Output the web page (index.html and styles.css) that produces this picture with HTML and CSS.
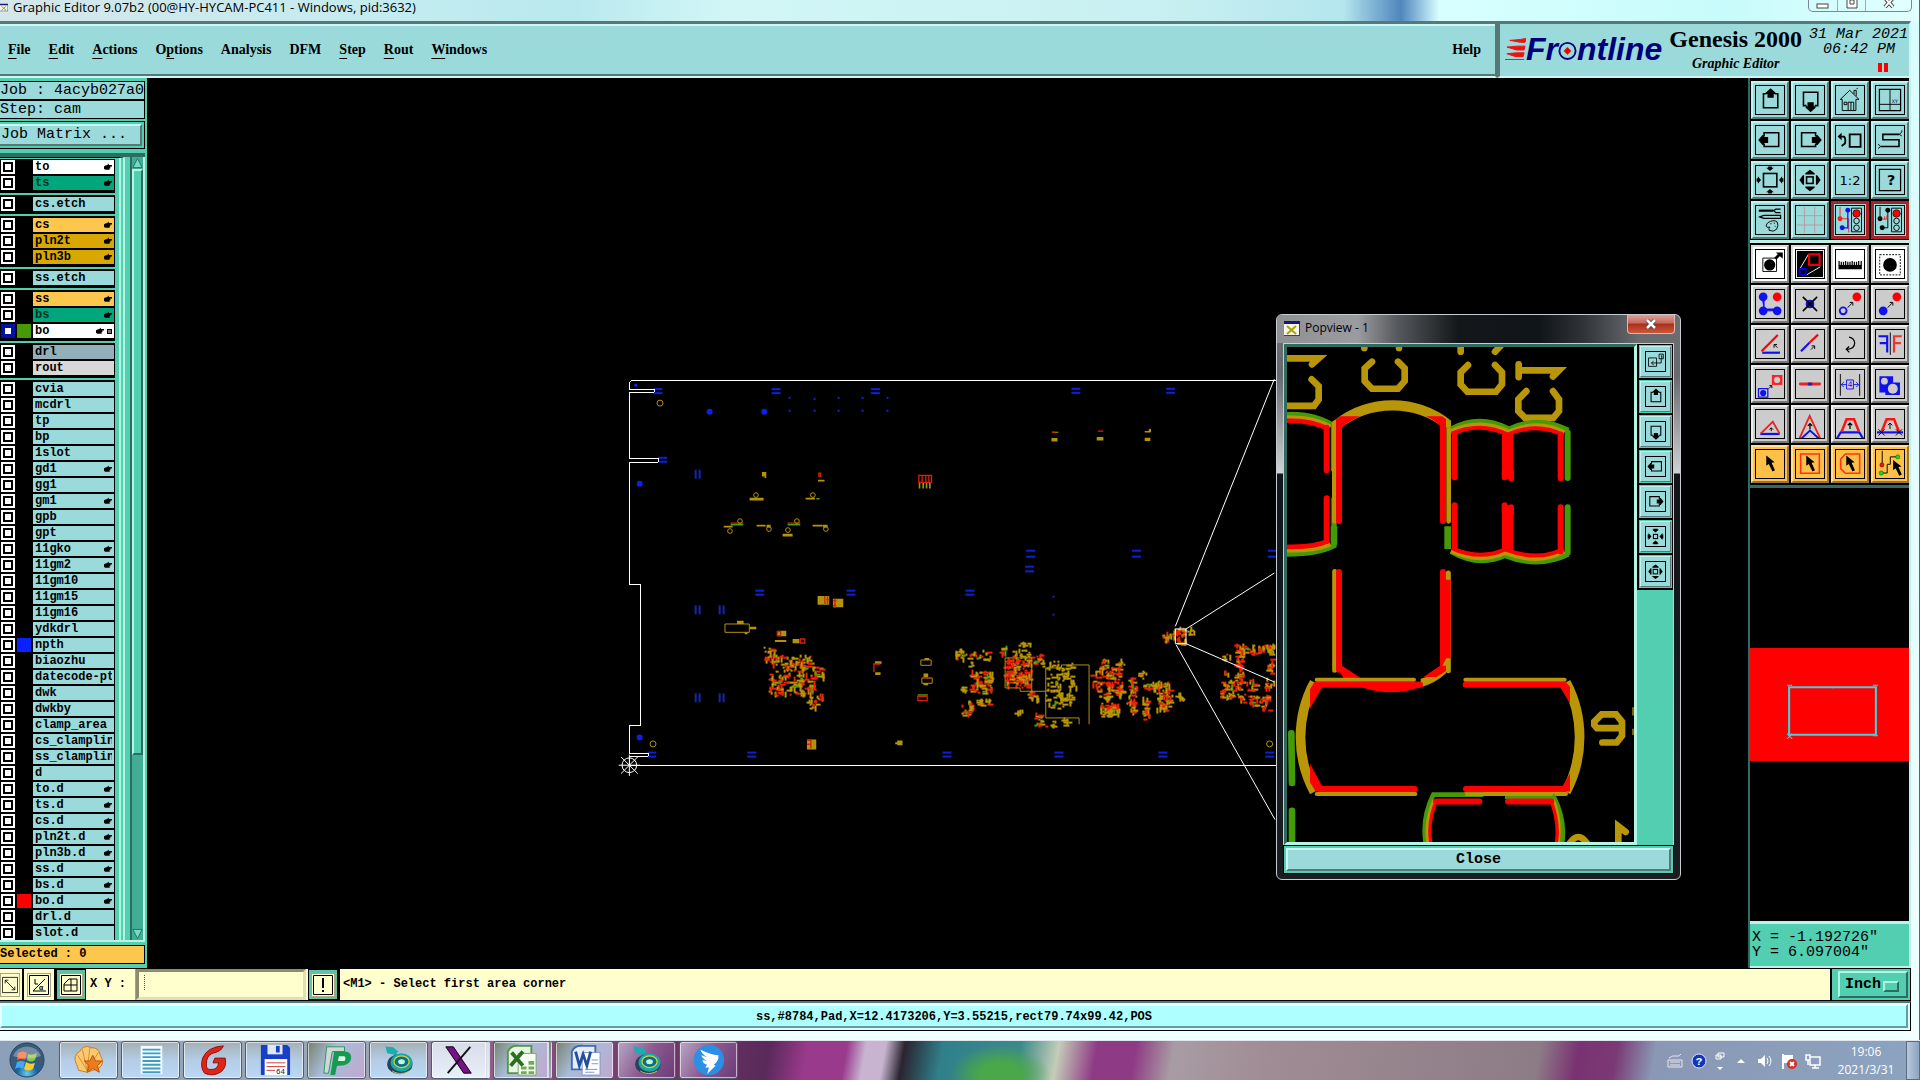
FILE: index.html
```
<!DOCTYPE html>
<html lang="en">
<head>
  <meta charset="UTF-8" />
  <meta name="viewport" content="width=device-width, initial-scale=1.0"/>
  <title>Graphic Editor</title>
  <link rel="stylesheet" href="styles.css">
</head>
<body>
  <!-- shared icons, drawn on a 90 unit grid -->
  <svg class="defs" aria-hidden="true">
    <symbol id="i-up" viewBox="0 0 90 90"><path d="M34 25H24v45h46V25H60" fill="none" stroke="#000" stroke-width="5"/><path d="M47 7l16 15v4h-6v12H37V26h-6v-4z"/></symbol>
    <symbol id="i-down" viewBox="0 0 90 90"><path d="M34 63H24V20h46v43H60" fill="none" stroke="#000" stroke-width="5"/><path d="M47 84l16-14v-5h-6V52H37v13h-6v5z"/></symbol>
    <symbol id="i-left" viewBox="0 0 90 90"><path d="M26 34V22h47v44H26V56" fill="none" stroke="#000" stroke-width="5"/><path d="M7 45l14-16h5v6h13v20H26v6h-5z"/></symbol>
    <symbol id="i-right" viewBox="0 0 90 90"><path d="M63 34V22H18v44h45V56" fill="none" stroke="#000" stroke-width="5"/><path d="M83 45L69 29h-5v6H51v20h13v6h5z"/></symbol>
    <symbol id="i-in" viewBox="0 0 90 90"><rect x="24" y="24" width="43" height="43" fill="none" stroke="#000" stroke-width="5"/><path d="M39 2h12v4h6L45 16 33 6h6zM39 88h12v-4h6L45 74 33 84h6zM2 39v12h4v6l10-12L6 33v6zM88 39v12h-4v6L74 45l10-12v6z"/></symbol>
    <symbol id="i-shrink" viewBox="0 0 90 90"><rect x="35" y="35" width="20" height="20" fill="none" stroke="#000" stroke-width="5"/><path d="M35 8h20v4h6L45 26 29 12h6zM35 82h20v-4h6L45 64 29 78h6zM8 35v20h4v6l14-16L12 29v6zM82 35v20h-4v6L64 45l14-16v6z"/></symbol>
    <symbol id="i-out" viewBox="0 0 90 90"><rect x="34" y="35" width="21" height="21" fill="none" stroke="#000" stroke-width="5"/><path d="M45 12L30 23v4h30v-4zM45 81L30 70v-4h30v4zM11 45l11-15h4v30h-4zM79 45L68 30h-4v30h4z"/></symbol>
    <symbol id="i-cursor" viewBox="0 0 90 90"><path d="M33 18v33l8-6 12 24 8-4-11-24 10-2z"/></symbol>
    <symbol id="i-hand" viewBox="0 0 10 9"><path d="M1 3l3-1 2-2v2h4v2H8v2H7v2H2L0 7V4z" fill="#000"/></symbol>
    <symbol id="i-x" viewBox="0 0 16 15"><rect width="16" height="15" fill="#f4f4ee"/><path d="M0 0h16v3H0z" fill="#15157c"/><path d="M3 5l9 8M12 5l-9 8" stroke="#a8a800" stroke-width="2"/><path d="M0 14.500h16M15.500 3v12" stroke="#444"/></symbol>
    <symbol id="i-tape" viewBox="0 0 34 38"><path d="M1 3l9 1 6 5-3 4-10-2z" fill="#19aeb4"/><ellipse cx="18" cy="24" rx="15" ry="12" fill="#28405a"/><ellipse cx="20" cy="22" rx="13" ry="11" fill="#16a9a6"/><ellipse cx="20" cy="21" rx="9" ry="7" fill="#0d6f80" stroke="#d9cf3e" stroke-width="1.500"/><ellipse cx="20" cy="21" rx="4" ry="3" fill="#bff5e4"/><path d="M9 32c6 4 14 4 20 0" stroke="#e2d64b" fill="none"/></symbol>
  </svg>

  <div class="window">
    <div class="titlebar">
      <svg class="app-icon"><use href="#i-x"/></svg>
      <span>Graphic Editor 9.07b2 (00@HY-HYCAM-PC411 - Windows, pid:3632)</span>
      <div class="win-controls">
        <button aria-label="Minimize"><svg viewBox="0 0 14 10"><rect x="1" y="4" width="11" height="4" fill="#fff" stroke="#444"/></svg></button>
        <button aria-label="Restore"><svg viewBox="0 0 14 10"><path d="M2-4h10V8H2zM5 0h4v4H5z" fill="#fff" stroke="#444"/></svg></button>
        <button class="wide" aria-label="Close window"><svg viewBox="0 0 14 10"><path d="M3-2l8 9M11-2L3 7" stroke="#444" stroke-width="4"/><path d="M3-2l8 9M11-2L3 7" stroke="#fff" stroke-width="2"/></svg></button>
      </div>
    </div>

    <header class="header">
      <nav class="menu">
        <a href="#"><u>F</u>ile</a>
        <a href="#"><u>E</u>dit</a>
        <a href="#"><u>A</u>ctions</a>
        <a href="#">O<u>p</u>tions</a>
        <a href="#">Analysis</a>
        <a href="#">DFM</a>
        <a href="#"><u>S</u>tep</a>
        <a href="#"><u>R</u>out</a>
        <a href="#"><u>W</u>indows</a>
        <a href="#" class="help">Help</a>
      </nav>
      <div class="brand">
        <div class="logo">
          <svg class="speed" viewBox="0 0 22 24"><path d="M5 3l11-1 6-1-1 4H16zM2 10l11-1h8l-1 4h-8zM2 17l10-1h8l-1 4h-8zM0 23h20" fill="#e11" stroke="#e11"/></svg>
          <span>Fr</span>
          <svg class="target" viewBox="0 0 20 24"><circle cx="10" cy="14" r="8.500" fill="none" stroke="#00007c" stroke-width="2"/><path d="M10 10l4 4-4 4-4-4z" fill="#e00"/></svg>
          <span>ntline</span>
        </div>
        <div class="product">
          <strong>Genesis 2000</strong>
          <em>Graphic Editor</em>
        </div>
        <div class="clock">
          <div>31 Mar 2021</div>
          <div class="time">06:42 PM</div>
          <div class="pause"><i></i><i></i></div>
        </div>
      </div>
    </header>

    <main class="main">
      <aside class="left">
        <div class="info">Job : 4acyb027a0</div>
        <div class="info">Step: cam</div>
        <div class="matrix-wrap"><button class="matrix">Job Matrix ...</button></div>
        <div class="layer-box">
          <div class="layers" id="layers"></div>
          <div class="track">
            <svg viewBox="0 0 12 12"><path d="M6 1l5 10H1z" fill="#72dcc6" stroke="#2b6e62"/></svg>
            <div class="thumb"></div>
            <div class="rest"></div>
            <svg viewBox="0 0 12 12"><path d="M6 11L1 1h10z" fill="#72dcc6" stroke="#2b6e62"/></svg>
          </div>
        </div>
        <div class="selected">Selected : 0</div>
      </aside>

      <section class="canvas">
        <svg class="board" viewBox="147 78 1602 889" preserveAspectRatio="xMinYMin meet">
          <g transform="translate(610 370) scale(.33333)">
            <g id="clusters"></g>
            <g fill="none" stroke="#b39309" stroke-width="3">
              <path d="M346 763h73v25h-73zM934 871h31v16h-31zM937 925h31v16h-31zM1309 895h47v-9h83v178M1309 895v150h100v19M1187 865h80v100h42M1187 865v90h45v10h35"/>
            </g>
            <g fill="#b39309">
              <path d="M457 307h13v18h-5v-5h-8zM625 330h20v5h-20zM420 384h42v8h-42zM588 384h28v5h-28zM342 468h27v5h-27zM441 465h27v5h-27zM471 465h12v8h-12zM609 465h30v5h-30zM640 465h14v8h-14zM519 492h30v8h-30zM382 753h20v10h-20zM420 771h20v8h-20zM405 788h9v6h-9zM624 679h35v26h-35zM670 687h31v26h-31zM503 783h27v17h-27zM496 811h34v6h-34zM549 808h20v13h-20zM592 1110h28v30h-28zM857 1118h8v6h-8zM863 1113h16v14h-16zM796 875h20v8h-20zM797 908h16v8h-16zM942 912h14v10h-14zM942 941h14v6h-14zM945 865h14v6h-14z"/>
              <path d="M1326 205h18v10h-18zM1330 186h17v3h-17zM1462 202h20v10h-20zM1606 204h17v10h-17zM1606 184h18v4h-18zM1618 178h7v9h-7z"/>
            </g>
            <path d="M930 339v17M941 339v17M951 339v17M961 339v17" stroke="#8c9a10" stroke-width="5"/>
            <path d="M928 317h38v21h-38zM938 317v20M949 317v20M958 317v20M646 679v24M650 690h9M654 679v24M676 687v28M670 693h11M670 708h11M503 786h10v12h-10zM572 808h14v12h-14zM592 1112h12v25M592 1124h12M1465 184h17M1327 187h10M793 907v-24h20M925 980h28v13h-28zM363 460h38M534 460h38M628 310h5v10h-5zM940 925h25" fill="none" stroke="#d9200a" stroke-width="4"/>
            <path d="M363 465h38M534 465h38M620 387h10M925 976h30" stroke="#4c9a10" stroke-width="4"/>
            <g id="pads"></g>
            <g fill="none" stroke="#b39309" stroke-width="3">
              <circle cx="151" cy="100" r="9"/><circle cx="130" cy="1123" r="9"/><circle cx="1981" cy="1123" r="9"/>
              <circle cx="439" cy="376" r="7"/><circle cx="610" cy="376" r="7"/><circle cx="391" cy="454" r="7"/><circle cx="361" cy="484" r="7"/>
              <circle cx="478" cy="478" r="7"/><circle cx="562" cy="454" r="7"/><circle cx="535" cy="481" r="7"/><circle cx="649" cy="478" r="7"/>
            </g>
            <g fill="none" stroke="#fff" stroke-width="3">
              <path shape-rendering="crispEdges" d="M2020 31H68l-9 7v20h75v9H59v198h87v12H59v366h33v426H59v82h57v9H59v27h1961"/>
              <path d="M1698 770L1995 28M1730 778l265-168M1730 822l265 115M1700 825l297 525M1698 778h32v44h-32z"/>
              <circle cx="59" cy="1187" r="22"/>
              <path d="M27 1187h64M59 1155v64M34 1162l50 50M84 1162l-50 50"/>
            </g>
          </g>
        </svg>
      </section>

      <aside class="right">
        <div class="tools">
          <button class="tool" aria-label="Pan up"><svg><use href="#i-up"/></svg></button>
          <button class="tool" aria-label="Pan down"><svg><use href="#i-down"/></svg></button>
          <button class="tool" aria-label="Home"><svg viewBox="0 0 90 90"><path d="M14 43l30-29 30 29H64v36H20V43zM58 26V14h7v18M66 10l4-4M39 79V52h18v27M48 52v27M26 52h9v8h-9z" fill="none" stroke="#000" stroke-width="3"/></svg></button>
          <button class="tool" aria-label="Zoom to XY"><svg viewBox="0 0 90 90"><path d="M11 11h68v68H11z" fill="none" stroke="#000" stroke-width="4"/><path d="M45 11v68M11 59h68" stroke="#000" stroke-width="3"/><text x="51" y="54" font-size="15">XY</text></svg></button>

          <button class="tool" aria-label="Pan left"><svg><use href="#i-left"/></svg></button>
          <button class="tool" aria-label="Pan right"><svg><use href="#i-right"/></svg></button>
          <button class="tool" aria-label="Previous view"><svg viewBox="0 0 90 90"><path d="M44 27h35v40H44zM14 34h12q6 6 3 22l-11 8" fill="none" stroke="#000" stroke-width="6"/><path d="M5 34l13-12v24z"/></svg></button>
          <button class="tool" aria-label="Serpentine"><svg viewBox="0 0 90 90"><path d="M75 27H22v17h52v22H15" fill="none" stroke="#000" stroke-width="5"/><path d="M75 27l8-8v-5M75 27l8 5M15 66l-8-8M15 66l-8 6" fill="none" stroke="#000" stroke-width="3"/></svg></button>

          <button class="tool" aria-label="Zoom in"><svg><use href="#i-in"/></svg></button>
          <button class="tool" aria-label="Zoom out"><svg><use href="#i-out"/></svg></button>
          <button class="tool" aria-label="Scale"><svg viewBox="0 0 90 90"><text x="45" y="61" font-size="42" text-anchor="middle">1:2</text></svg></button>
          <button class="tool" aria-label="Query"><svg viewBox="0 0 90 90"><path d="M11 11h68v68H11z" fill="none" stroke="#000" stroke-width="4"/><text x="49" y="62" font-size="46" font-weight="bold" text-anchor="middle">?</text></svg></button>

          <button class="tool" aria-label="Options"><svg viewBox="0 0 90 90"><path d="M9 15h46" stroke="#000" stroke-width="7"/><path d="M79 10H64l-8 5 8 6h15M12 35l13-5h54v10H25z" fill="none" stroke="#000" stroke-width="4"/><path d="M38 54q18-12 30-3 6 12-2 24-10 10-24 3-2-7 3-10-14 3-12-7zM46 57h4M57 55h4M60 65h3" fill="none" stroke="#000" stroke-width="3"/></svg></button>
          <button class="tool" aria-label="Grid"><svg viewBox="0 0 90 90"><path d="M27 3v84M60 3v84M3 31h84M3 61h84" stroke="#b79aa0" stroke-width="3"/></svg></button>
          <button class="tool alert" aria-label="Net points on"><svg viewBox="0 0 90 90"><path d="M13 3v38h28v44" fill="none" stroke="#e22" stroke-width="3"/><path d="M38 14v56H20" fill="none" stroke="#11e" stroke-width="4"/><circle cx="38" cy="14" r="8" fill="#11e"/><circle cx="20" cy="70" r="8" fill="#11e"/><circle cx="13" cy="41" r="8" fill="#e22"/><path d="M50 7h32v76H50z" fill="#9bdadb" stroke="#000" stroke-width="3"/><circle cx="66" cy="24" r="12" fill="#f00" stroke="#000" stroke-width="2"/><circle cx="66" cy="48" r="9" fill="none" stroke="#000" stroke-width="3"/><circle cx="66" cy="70" r="9" fill="none" stroke="#000" stroke-width="3"/></svg></button>
          <button class="tool alert" aria-label="Net points off"><svg viewBox="0 0 90 90"><path d="M13 3v38M38 14v56H20" fill="none" stroke="#000" stroke-width="3"/><circle cx="38" cy="14" r="8"/><circle cx="20" cy="70" r="8"/><circle cx="13" cy="41" r="8"/><path d="M20 42h15v-12M28 42v-9" fill="none" stroke="#e22" stroke-width="3"/><path d="M50 7h32v76H50z" fill="#9bdadb" stroke="#000" stroke-width="3"/><circle cx="66" cy="24" r="12" fill="#f00" stroke="#000" stroke-width="2"/><circle cx="66" cy="48" r="9" fill="none" stroke="#000" stroke-width="3"/><circle cx="66" cy="70" r="9" fill="none" stroke="#000" stroke-width="3"/></svg></button>
        </div>

        <div class="tools edit">
          <button class="tool white" aria-label="Add feature"><svg viewBox="0 0 90 90"><path d="M22 26h44v43H22z" fill="none" stroke="#000" stroke-width="3"/><circle cx="44" cy="48" r="18"/><path d="M62 28l16-16" stroke="#000" stroke-width="9"/><path d="M64 8h22v20z"/></svg></button>
          <button class="tool white" aria-label="Popview"><svg viewBox="0 0 90 90"><path d="M3 3h84v84H3z"/><path d="M40 14L14 58M78 54L34 80" stroke="#fff" stroke-width="3"/><path d="M42 14h34v34H42z" fill="none" stroke="#e00" stroke-width="7"/><path d="M12 61h19v19H12z" fill="none" stroke="#00e" stroke-width="6"/></svg></button>
          <button class="tool white" aria-label="Measure"><svg viewBox="0 0 90 90"><path d="M8 48h75v14H8z"/><path d="M10 50V35M17 50V38M24 50V38M31 50V35M38 50V38M45 50V38M52 50V35M59 50V38M66 50V38M73 50V35M81 50V35" stroke="#000" stroke-width="4"/></svg></button>
          <button class="tool white" aria-label="Select area"><svg viewBox="0 0 90 90"><path d="M12 15h66v65H12z" fill="none" stroke="#000" stroke-width="3" stroke-dasharray="6 4"/><circle cx="45" cy="48" r="22"/></svg></button>

          <button class="tool grey" aria-label="Move feature"><svg viewBox="0 0 90 90" fill="#11e"><path d="M19 19h7v48h45v-6H26z" stroke="#11e" stroke-width="3"/><circle cx="23" cy="22" r="14"/><circle cx="23" cy="67" r="14"/><circle cx="68" cy="67" r="14"/><circle cx="68" cy="22" r="14" fill="#f00"/></svg></button>
          <button class="tool grey" aria-label="Delete"><svg viewBox="0 0 90 90"><circle cx="45" cy="45" r="14" fill="#11c"/><path d="M22 22l46 46M68 22L22 68" stroke="#000" stroke-width="5"/></svg></button>
          <button class="tool grey" aria-label="Copy"><svg viewBox="0 0 90 90"><circle cx="67" cy="22" r="14" fill="#f00"/><circle cx="23" cy="67" r="11" fill="none" stroke="#11e" stroke-width="6"/><path d="M37 57l16-16M44 40h10v10" fill="none" stroke="#000" stroke-width="3"/></svg></button>
          <button class="tool grey" aria-label="Move"><svg viewBox="0 0 90 90"><circle cx="67" cy="22" r="14" fill="#f00"/><circle cx="23" cy="67" r="14" fill="#11e"/><path d="M37 57l16-16M44 40h10v10" fill="none" stroke="#000" stroke-width="3"/></svg></button>

          <button class="tool grey" aria-label="Rotate line"><svg viewBox="0 0 90 90"><path d="M20 73h57" stroke="#11e" stroke-width="7"/><path d="M18 68l52-52" stroke="#f00" stroke-width="7"/><path d="M69 57L59 47M58 57V47h10" fill="none" stroke="#000" stroke-width="3"/></svg></button>
          <button class="tool grey" aria-label="Extend line"><svg viewBox="0 0 90 90"><path d="M16 68l28-28" stroke="#11e" stroke-width="7"/><path d="M44 40l27-25" stroke="#f00" stroke-width="7"/><path d="M48 63l11-11M50 51h10v10" fill="none" stroke="#000" stroke-width="3"/></svg></button>
          <button class="tool grey" aria-label="Rotate"><svg viewBox="0 0 90 90"><path d="M42 23q17 3 18 19 0 19-24 20M42 53l-9 9 10 10" fill="none" stroke="#000" stroke-width="4"/></svg></button>
          <button class="tool grey" aria-label="Mirror"><svg viewBox="0 0 90 90"><path d="M8 20h28v52M12 42h24" fill="none" stroke="#11e" stroke-width="7"/><path d="M83 20H58v52M80 42H58" fill="none" stroke="#e33" stroke-width="7"/><path d="M46 8v72" stroke="#000" stroke-width="3"/></svg></button>

          <button class="tool grey" aria-label="Replace symbol"><svg viewBox="0 0 90 90"><path d="M8 60h30v27H8z" fill="none" stroke="#11e" stroke-width="4"/><circle cx="23" cy="74" r="10" fill="#11e"/><path d="M51 16h34v32H51z" fill="#f22"/><circle cx="68" cy="32" r="10" fill="#ccc"/><path d="M41 60l9-9M43 50h8v8" fill="none" stroke="#000" stroke-width="3"/></svg></button>
          <button class="tool grey" aria-label="Merge lines"><svg viewBox="0 0 90 90"><path d="M14 45h62" stroke="#e22" stroke-width="9" stroke-linecap="round"/><path d="M38 45h14" stroke="#22a" stroke-width="9"/></svg></button>
          <button class="tool grey" aria-label="Spacing"><svg viewBox="0 0 90 90"><path d="M14 13v70M76 13v70" stroke="#000" stroke-width="3"/><path d="M17 47h17M73 47H56M25 39l-8 8 8 8M65 39l8 8-8 8M34 32h22v29H34z" fill="none" stroke="#11e" stroke-width="3"/><text x="45" y="56" font-size="24" text-anchor="middle" fill="#11e">4</text></svg></button>
          <button class="tool grey" aria-label="Boolean"><svg viewBox="0 0 90 90"><path d="M11 20h44v20h22v40H30V72H11z" fill="#11e"/><circle cx="27" cy="36" r="11" fill="#ccc"/><circle cx="54" cy="60" r="16" fill="#ccc"/></svg></button>

          <button class="tool grey" aria-label="Slide one"><svg viewBox="0 0 90 90"><path d="M14 77h62" stroke="#11e" stroke-width="7"/><path d="M15 76l39-38 22 38" fill="none" stroke="#e22" stroke-width="6"/><path d="M49 68V58M43 63l6-6 6 6" fill="none" stroke="#000" stroke-width="3"/></svg></button>
          <button class="tool grey" aria-label="Slide corner"><svg viewBox="0 0 90 90"><path d="M10 94l34-75 35 75" fill="none" stroke="#e22" stroke-width="6"/><path d="M15 94l30-28 31 28" fill="none" stroke="#11e" stroke-width="6"/><path d="M45 62V45M38 51l7-7 7 7" fill="none" stroke="#000" stroke-width="4"/></svg></button>
          <button class="tool grey" aria-label="Slide segment"><svg viewBox="0 0 90 90"><path d="M3 92l12-20h60l12 20" fill="none" stroke="#11e" stroke-width="7"/><path d="M18 70l16-40h24l16 40" fill="none" stroke="#f11" stroke-width="8"/><path d="M45 61V43M38 49l7-7 7 7" fill="none" stroke="#000" stroke-width="4"/></svg></button>
          <button class="tool grey" aria-label="Slide and cut"><svg viewBox="0 0 90 90"><path d="M3 72h84" stroke="#11e" stroke-width="7"/><path d="M18 70l16-40h24l16 40" fill="none" stroke="#f11" stroke-width="8"/><path d="M45 61V43M38 49l7-7 7 7M8 62l20 20M28 62L8 82M64 62l20 20M84 62L64 82" fill="none" stroke="#000" stroke-width="3"/></svg></button>

          <button class="tool amber" aria-label="Select"><svg><use href="#i-cursor"/></svg></button>
          <button class="tool amber" aria-label="Select in box"><svg viewBox="0 0 90 90"><path d="M15 13h60v62H15z" fill="none" stroke="#f31" stroke-width="5"/><use href="#i-cursor" width="90" height="90"/></svg></button>
          <button class="tool amber" aria-label="Select in polygon"><svg viewBox="0 0 90 90"><path d="M30 13h46v62H30L15 60V30z" fill="none" stroke="#f31" stroke-width="5"/><use href="#i-cursor" width="90" height="90"/></svg></button>
          <button class="tool amber" aria-label="Select net"><svg viewBox="0 0 90 90"><path d="M20 3v44M16 74h20V46h10V22h24" fill="none" stroke="#000" stroke-width="3"/><circle cx="19" cy="48" r="7" fill="#e11" stroke="#000"/><circle cx="17" cy="74" r="7" fill="#1d1" stroke="#000"/><circle cx="70" cy="22" r="7" fill="#1d1" stroke="#000"/><use href="#i-cursor" x="22" y="14" width="90" height="90"/></svg></button>
        </div>

        <div class="overview">
          <div class="extent">
            <svg viewBox="0 0 90 54"><path d="M3 4h84v46H3z" fill="none" stroke="#3fd0e0" stroke-width="2"/><path d="M1 49l5 5M6 49l-5 5M1 2h5M84 2h5M84 51h5M45 4v1" stroke="#3fd0e0"/></svg>
          </div>
        </div>
        <div class="coords">X = -1.192726"<br>Y = 6.097004"</div>
      </aside>

      <div class="popup" role="dialog" aria-label="Popview">
        <div class="popup-title">
          <svg class="app-icon"><use href="#i-x"/></svg>
          <span>Popview - 1</span>
          <button aria-label="Close popview"><svg viewBox="0 0 12 10"><path d="M2 1l8 8M10 1L2 9" stroke="#444" stroke-width="4"/><path d="M2 1l8 8M10 1L2 9" stroke="#fff" stroke-width="2.500"/></svg></button>
        </div>
        <div class="popup-body">
          <div class="popup-view">
            <svg viewBox="51 108 1041 1482" preserveAspectRatio="none" fill="none" stroke-linecap="round">
              <!-- silk text -->
              <g stroke="#b89608" stroke-width="20">
                <path d="M41 142h105l-20 18M125 205l21 20v40l-14 19H41"/>
                <path d="M306 152l-22 20v38l22 23h78l20-23v-38l-20-20M283 106v5M387 106v5"/>
                <path d="M594 162l-22 22v36l20 22h86l18-22v-36l-21-22M572 104v18M692 104l-17 18"/>
                <path d="M769 240l-24 25v35l20 20h85l17-20v-35l-18-25M746 160v38M746 178h121l-18 18"/>
                <path d="M997 1292h43l16-20v-42l-18-22h-43l-22 22v10l8 9h75M1045 1600v-57l22 17M895 1600q30-50 60 0z"/>
              </g>
              <path d="M1089 1188v22M1089 1252v16" stroke="#b89608" stroke-width="4"/>
              <!-- left part -->
              <g stroke-linecap="butt">
                <path d="M41 311q90-6 150 34v135M192 560v143q-50 26-151 25" stroke="#459a08" stroke-width="16"/>
                <path d="M41 320q80-6 140 26M41 717q90 4 140-18" stroke="#b89608" stroke-width="12"/>
                <path d="M41 330q80-6 135 24M41 706q90 4 135-18" stroke="#f00" stroke-width="14"/>
              </g>
              <path d="M170 350v127M170 561v127" stroke="#f00" stroke-width="18"/>
              <!-- tall part -->
              <path d="M192 645v55M533 645v68" stroke="#459a08" stroke-width="20" stroke-linecap="butt"/>
              <path d="M193 335v295M536 335v295" stroke="#b89608" stroke-width="14"/>
              <path d="M200 341A270 270 0 0 1 535 341" stroke="#b89608" stroke-width="30" stroke-linecap="butt"/>
              <path d="M207 335v294M519 335v294" stroke="#f00" stroke-width="18"/>
              <path d="M198 350v-26l12-9h60q-34 14-55 35zM528 350v-26l-12-9h-48q32 14 46 35z" fill="#f00"/>
              <path d="M194 780v296M535 785v292" stroke="#b89608" stroke-width="15"/>
              <path d="M207 782v292M519 782v280" stroke="#f00" stroke-width="18"/>
              <path d="M532 805v235" stroke="#f00" stroke-width="20" stroke-linecap="butt"/>
              <path d="M528 1042v43q-32 30-76 42v-26q30-6 60-30z" fill="#b89608"/>
              <path d="M198 1062h18l55 36-50 2zM528 1062h-18l-50 34h40l28-18z" fill="#f00"/>
              <!-- right pair -->
              <g stroke-linecap="butt">
                <path d="M543 354q85-46 174 0 88-42 178 4M543 720q85 48 162 12 100 40 190-4" stroke="#459a08" stroke-width="16"/>
                <path d="M543 360q85-40 174 2 88-40 166 2M543 718q85 40 162 6 100 38 178-4" stroke="#b89608" stroke-width="13"/>
                <path d="M545 368q85-38 168 2 88-38 168 2M545 710q85 38 160 4 100 38 176-2" stroke="#f00" stroke-width="12"/>
                <path d="M713 365v130M713 582v134" stroke="#f00" stroke-width="34"/>
              </g>
              <path d="M893 364v136M893 588v136" stroke="#459a08" stroke-width="18"/>
              <path d="M554 368v130M704 480v18M723 480v21M872 370v131M554 582v126M704 582v20M723 588v20M872 588v132" stroke="#f00" stroke-width="18"/>
              <!-- wide part -->
              <path d="M64 1265l2 148M66 1497v110" stroke="#459a08" stroke-width="20"/>
              <path d="M133 1112A345 345 0 0 0 133 1440M888 1112A350 350 0 0 1 888 1440" stroke="#b89608" stroke-width="29" stroke-linecap="butt"/>
              <path d="M140 1104h292M586 1104h298M140 1446h296M586 1446h302" stroke="#b89608" stroke-width="12"/>
              <path d="M142 1119h308M587 1119h295M148 1431h286M588 1431h295" stroke="#f00" stroke-width="18"/>
              <path d="M120 1190v-58l14-22 26 10zM120 1356v55l18 29 20-14zM900 1175v-50l-14-15-18 12zM900 1384v55h-25v-12zM273 1126q90 32 180 0v-16H273z" fill="#f00"/>
              <path d="M640 1448H490q-36 72-22 152M705 1454h146q38 76 24 146" stroke="#459a08" stroke-width="14" stroke-linecap="butt"/>
              <path d="M586 1447h262M492 1464q-30 70-16 136M850 1464q26 70 14 136" stroke="#b89608" stroke-width="10" stroke-linecap="butt"/>
              <path d="M498 1469h130M714 1469h130" stroke="#f00" stroke-width="18"/>
              <path d="M500 1464q-30 70-16 136M842 1464q28 70 16 136" stroke="#f00" stroke-width="10" stroke-linecap="butt"/>
            </svg>
          </div>
          <div class="popup-tools">
            <button class="tool" aria-label="Set view"><svg viewBox="0 0 90 90"><path d="M12 28h38v40H12zM62 10h20v22H62zM70 18h5v14M72 32v20H26M36 42L26 52l10 10" fill="none" stroke="#000" stroke-width="4"/></svg></button>
            <button class="tool" aria-label="View up"><svg><use href="#i-up"/></svg></button>
            <button class="tool" aria-label="View down"><svg><use href="#i-down"/></svg></button>
            <button class="tool" aria-label="View left"><svg><use href="#i-left"/></svg></button>
            <button class="tool" aria-label="View right"><svg><use href="#i-right"/></svg></button>
            <button class="tool" aria-label="View in"><svg><use href="#i-shrink"/></svg></button>
            <button class="tool" aria-label="View out"><svg><use href="#i-out"/></svg></button>
          </div>
        </div>
        <div class="popup-foot"><button>Close</button></div>
      </div>
    </main>

    <div class="command">
      <button class="cmd-btn" aria-label="Snap"><svg viewBox="0 0 20 20"><path d="M.5.5h19v19H.500zM4 4l12 12M4 8V4h4M16 12v4h-4" fill="none" stroke="#000"/></svg></button>
      <button class="cmd-btn" aria-label="Angle"><svg viewBox="0 0 20 20"><path d="M.5.5h19v19H.500zM16 4L4 16h13M6 4v5h3" fill="none" stroke="#000"/><text x="10" y="15" font-size="7">α</text></svg></button>
      <button class="cmd-btn on" aria-label="Grid snap"><svg viewBox="0 0 20 20"><path d="M.5.5h19v19H.500zM3 9l5-5h8v12H3zM3 10h13M10 4v12" fill="none" stroke="#000"/></svg></button>
      <label for="xy">X Y :</label>
      <input type="text" id="xy">
      <button class="cmd-btn on" aria-label="Apply"><svg viewBox="0 0 20 20"><path d="M.5.5h19v19H.500z" fill="none" stroke="#000"/><path d="M10 3v10M10 15v2" stroke="#000" stroke-width="2"/></svg></button>
      <div class="message">&lt;M1&gt; - Select first area corner</div>
      <div class="units">
        <select aria-label="Units"><option>Inch</option><option>MM</option></select>
      </div>
    </div>
    <div class="status"><div>ss,#8784,Pad,X=12.4173206,Y=3.55215,rect79.74x99.42,POS</div></div>
  </div>

  <footer class="taskbar">
    <button class="start" aria-label="Start"><svg viewBox="0 0 36 36"><defs><radialGradient id="orb" cy=".9"><stop offset="0" stop-color="#5fd0f0"/><stop offset=".6" stop-color="#1c5f9e"/><stop offset="1" stop-color="#3a5a7a"/></radialGradient></defs><circle cx="18" cy="18" r="17" fill="url(#orb)" stroke="#26435f"/><path d="M9 11q5-3 9 0l-2 7q-4-2-8 0z" fill="#f0652a"/><path d="M19 12q4 2 9-1l-2 7q-4 3-8 0z" fill="#8cc63f"/><path d="M8 20q4-2 8 0l-2 7q-4-3-8 0z" fill="#3fa9f5"/><path d="M17 20q4 3 9 1l-2 6q-5 3-9 0z" fill="#fcc92b"/><path d="M4 14a15 15 0 0 1 28 0q-14 5-28 0z" fill="#fff" opacity=".3"/></svg></button>
    <button class="task light" aria-label="Shell"><svg viewBox="0 0 34 34"><path d="M4 22Q-1 12 7 8q5-8 12-4 8-1 10 8 6 9-2 14l-12 4-9-2z" fill="#fbc870" stroke="#c77a1c"/><path d="M15 28L5 12M15 28L10 6M15 28L18 4M15 28L27 9" stroke="#d98c2b" fill="none"/><path d="M21 12l3 6 7 0-5 5 2 7-7-4-6 4 2-7-5-5h6z" fill="#f07b1c" stroke="#b84e0c"/></svg></button>
    <button class="task light" aria-label="Notepad"><svg viewBox="0 0 34 34"><path d="M6 2h23v30H6z" fill="#f4fbff"/><path d="M8 6h19M8 10h19M8 14h19M8 18h19M8 22h19M8 26h19M8 30h19" stroke="#3a9ec9" stroke-width="2"/></svg></button>
    <button class="task light" aria-label="Genesis"><svg viewBox="0 0 34 34"><path d="M28 2q-2 6-12 8-6 3-6 11-1 7 6 6 6 0 7-7h-6l2-5h11q2 10-5 15-9 5-17 1-5-6-2-16Q11 3 28 2z" fill="#df2418" stroke="#8d0d08"/></svg></button>
    <button class="task light" aria-label="Save tool"><svg viewBox="0 0 34 34"><path d="M2 1h28l3 3v29H2z" fill="#1740c8"/><path d="M9 1h16v10H9z" fill="#dfe6f4"/><path d="M18 2h4v7h-4z" fill="#1740c8"/><path d="M6 16h24v17H6z" fill="#fff"/><path d="M8 20h20M8 24h20M8 28h9" stroke="#c33"/><text x="18" y="32" font-size="8" fill="#222">64</text></svg></button>
    <button class="task mix" aria-label="Project"><svg viewBox="0 0 34 34"><path d="M6 3h19v5H12L8 31H3z" fill="#cfd8d4" stroke="#1d9a58"/><path d="M14 8h12q7 1 6 8-2 7-12 7h-3l-2 10h-5z" fill="#159a50"/><path d="M19 13h6q2 2 0 5h-7z" fill="#dff3e6"/></svg></button>
    <button class="task light" aria-label="Tape"><svg><use href="#i-tape"/></svg></button>
    <button class="task active stack" aria-label="X server"><svg viewBox="0 0 34 34"><path d="M3 3h8l19 28h-8z" fill="#7a0f8c" stroke="#000"/><path d="M29 3L5 31" stroke="#111" stroke-width="2"/></svg></button>
    <button class="task mix stack" aria-label="Spreadsheet"><svg viewBox="0 0 34 34"><path d="M3 8q3-7 12-6h13v29H3z" fill="#e8f4e4" stroke="#4d9a3a" stroke-width="2"/><path d="M14 10h19v23H14z" fill="#f6fbf4" stroke="#75a866"/><path d="M17 24h6v3h-6zM25 24h6v3h-6zM17 29h6v3h-6zM25 29h6v3h-6zM25 18h6v4h-6z" fill="#6fae4f"/><path d="M7 9l12 14M19 8L6 23" stroke="#2c6e20" stroke-width="4"/></svg></button>
    <button class="task mix" aria-label="Word processor"><svg viewBox="0 0 34 34"><path d="M3 8q3-7 12-6h13v25H3z" fill="#e6edf9" stroke="#3f69b4" stroke-width="2"/><path d="M14 9h19v24H14z" fill="#fff" stroke="#7b93c4"/><path d="M17 27h13M17 30h10M24 17h7M24 21h7" stroke="#7b93c4"/><path d="M7 8l4 15 4-12 4 12 4-15" fill="none" stroke="#234f9f" stroke-width="3"/></svg></button>
    <button class="task purple" aria-label="Tape 2"><svg><use href="#i-tape"/></svg></button>
    <button class="task purple" aria-label="Messenger"><svg viewBox="0 0 34 34"><circle cx="17" cy="17" r="16" fill="#2b8fe6"/><path d="M8 6q10 5 19 6 1 6-5 10l2 1-9 9 2-7h-4l2-3q-5-1-5-5l5 1q-6-3-6-6l6 2Q9 10 8 6z" fill="#fff"/></svg></button>
    <div class="tray">
      <svg viewBox="0 0 16 16"><path d="M1 7h14v7H1zM3 9h10M3 12h10M2 5q4-3 7-2t5-2" fill="none" stroke="#e8e8f0"/></svg>
      <svg viewBox="0 0 16 16"><circle cx="8" cy="8" r="7" fill="#1434b8" stroke="#dfe6ff"/><text x="8" y="12" font-size="11" font-weight="bold" text-anchor="middle" fill="#fff">?</text></svg>
      <svg class="lang" viewBox="0 0 10 20"><path d="M3 2h6v4H3zM1 4h5v4H1z" fill="none" stroke="#fff"/><path d="M2 16h6l-3 3z" fill="#fff"/></svg>
      <svg viewBox="0 0 16 16"><path d="M4 10h8L8 6z" fill="#fff"/></svg>
      <svg viewBox="0 0 16 16"><path d="M1 6h3l4-4v12l-4-4H1z" fill="#fff"/><path d="M10 5q2 3 0 6M12 3q4 5 0 10" fill="none" stroke="#fff"/></svg>
      <svg viewBox="0 0 16 16"><path d="M2 1v15" stroke="#fff" stroke-width="2"/><path d="M3 2h9v8H3z" fill="#fff"/><circle cx="11" cy="11" r="5" fill="#d92b1e"/><path d="M9 9l4 4M13 9l-4 4" stroke="#fff" stroke-width="2"/></svg>
      <svg viewBox="0 0 16 16"><path d="M5 4h10v8H5zM7 15h7M10 12v3M1 2h4v5H1zM3 7v5" fill="none" stroke="#fff" stroke-width="1.500"/></svg>
      <div class="date">19:06<br>2021/3/31</div>
    </div>
    <button class="peek" aria-label="Show desktop"></button>
  </footer>

  <script src="app.js"></script>
</body>
</html>
```
FILE: app.js
```
// [name, row colour, has hand mark, swatch]
const groups = [
  [['to', 'white', 1], ['ts', 'green', 1]],
  [['cs.etch']],
  [['cs', 'orange', 1], ['pln2t', 'gold', 1], ['pln3b', 'gold', 1]],
  [['ss.etch']],
  [['ss', 'orange', 1], ['bs', 'green', 1], ['bo', 'white work', 1, 'sw-green']],
  [['drl', 'slate'], ['rout', 'silver']],
  [['cvia'], ['mcdrl'], ['tp'], ['bp'], ['1slot'], ['gd1', '', 1], ['gg1'], ['gm1', '', 1], ['gpb'], ['gpt'],
   ['11gko', '', 1], ['11gm2', '', 1], ['11gm10'], ['11gm15'], ['11gm16'], ['ydkdrl'], ['npth', '', 0, 'sw-blue'],
   ['biaozhu'], ['datecode-pto'], ['dwk'], ['dwkby'], ['clamp_area'], ['cs_clampline'], ['ss_clampline'], ['d'],
   ['to.d', '', 1], ['ts.d', '', 1], ['cs.d', '', 1], ['pln2t.d', '', 1], ['pln3b.d', '', 1], ['ss.d', '', 1],
   ['bs.d', '', 1], ['bo.d', '', 1, 'sw-red'], ['drl.d'], ['slot.d']]
];

document.getElementById('layers').innerHTML = groups.map(rows =>
  '<div class="group">' + rows.map(([name, color = '', hand, swatch = '']) => `
    <div class="layer ${color}">
      <input type="checkbox" id="l-${name}">
      <span class="swatch ${swatch}"></span>
      <label for="l-${name}"><span>${name}</span>${hand ? '<svg class="hand"><use href="#i-hand"/></svg>' : ''}${name === 'bo' ? '<i class="mark"></i>' : ''}</label>
    </div>`).join('') + '</div>').join('');

const rect = (x, y, w, h, fill) => `<rect x="${x}" y="${y}" width="${w}" height="${h}" fill="${fill}"/>`;

// drill slots: [x, y, gap]
const across = [[144, 64, 6], [499, 64, 6], [797, 64, 6], [158, 270, 6], [450, 669, 6], [724, 669, 6], [126, 1155, 6],
  [426, 1155, 6], [1012, 1155, 6], [1399, 63, 6], [1683, 63, 6], [1263, 552, 9], [1581, 552, 9], [1989, 552, 9],
  [1260, 598, 7], [1081, 669, 6], [1348, 1155, 6], [1660, 1155, 6], [1981, 1155, 6]];
const upright = [[264, 313], [264, 720], [336, 720], [264, 984], [336, 984]];
const dots = [[300, 126, 9], [464, 126, 9], [90, 342, 9], [90, 1104, 9], [78, 46, 5]];
const tiny = [[540, 84], [615, 87], [687, 84], [759, 84], [834, 84], [540, 123], [615, 123], [687, 123], [759, 123],
  [834, 123], [1332, 681], [1332, 735]];

document.getElementById('pads').innerHTML =
  across.map(([x, y, g]) => rect(x - 13, y - g - 3, 27, 6, '#0a22d8') + rect(x - 13, y + g - 3, 27, 6, '#0a22d8')).join('') +
  upright.map(([x, y]) => rect(x - 9, y - 13, 6, 27, '#1226b4') + rect(x + 3, y - 13, 6, 27, '#1226b4')).join('') +
  dots.map(([x, y, r]) => `<circle cx="${x}" cy="${y}" r="${r}" fill="#0a22e8"/>`).join('') +
  tiny.map(([x, y]) => rect(x - 3, y - 3, 6, 6, '#1226d0')).join('');

// component areas: [x, y, half width, half height, parts, share of red]
const areas = [
  [550, 915, 68, 58, 110, .4], [560, 880, 40, 20, 20, .3], [490, 868, 28, 10, 12, .5], [480, 842, 12, 14, 8, .3],
  [498, 962, 20, 12, 12, .6], [566, 960, 16, 20, 10, .2], [625, 910, 16, 20, 14, .5], [612, 996, 16, 20, 12, .4],
  [628, 982, 12, 6, 5, .4], [1042, 852, 12, 13, 8, .2], [1100, 858, 42, 12, 22, .3], [1090, 886, 10, 5, 3, 0],
  [1112, 935, 34, 34, 42, .45], [1140, 920, 12, 12, 8, 0], [1064, 958, 8, 10, 5, .1], [1115, 998, 38, 8, 14, .2],
  [1074, 1020, 18, 16, 16, .3], [1226, 910, 38, 42, 110, .6], [1180, 848, 8, 14, 6, .7], [1240, 850, 26, 12, 14, .1],
  [1245, 824, 16, 7, 6, 0], [1284, 868, 14, 14, 10, .4], [1322, 882, 24, 6, 8, .2], [1272, 978, 14, 14, 12, .3],
  [1355, 950, 42, 66, 80, 0], [1224, 1028, 12, 6, 4, 0], [1290, 1050, 14, 18, 14, .4], [1325, 1064, 12, 7, 5, .2],
  [1371, 1056, 14, 8, 6, 0], [1492, 930, 44, 36, 66, .5], [1486, 882, 12, 12, 8, .4], [1536, 882, 16, 12, 8, .2],
  [1486, 980, 18, 10, 12, .5], [1500, 1012, 30, 8, 26, .6], [1500, 1030, 28, 8, 18, 0], [1536, 965, 14, 12, 12, .5],
  [1570, 940, 10, 22, 12, .5], [1570, 995, 12, 36, 24, .5], [1600, 916, 12, 10, 6, .2], [1608, 1015, 10, 32, 20, .3],
  [1620, 945, 14, 12, 8, .4], [1665, 980, 24, 42, 50, .4], [1650, 948, 20, 14, 10, .1], [1712, 982, 10, 8, 6, .3],
  [1678, 800, 16, 14, 12, .4], [1712, 800, 14, 24, 26, .6], [1748, 784, 8, 8, 5, .1], [1855, 862, 12, 6, 5, .4],
  [1850, 908, 8, 8, 4, .5], [1855, 960, 18, 28, 30, .5], [1890, 900, 12, 60, 46, .55], [1910, 840, 30, 14, 24, .4],
  [1955, 842, 12, 14, 10, .2], [1980, 838, 12, 18, 16, .4], [1982, 890, 10, 24, 14, .4], [1926, 945, 16, 16, 12, .4],
  [1898, 985, 12, 12, 8, .5], [1936, 990, 14, 20, 14, .4], [1972, 1000, 14, 20, 16, .5], [1980, 945, 12, 16, 10, .5]
];

let seed = 7;
function rnd() {
  seed = (seed * 16807) % 2147483647;
  return seed / 2147483647;
}

let parts = '';
areas.forEach(([cx, cy, rw, rh, n, red]) => {
  for (let i = 0; i < n * 1.2; i++) {
    const x = Math.round((cx + (rnd() * 2 - 1) * rw) / 3) * 3;
    const y = Math.round((cy + (rnd() * 2 - 1) * rh) / 3) * 3;
    const long = 6 + Math.floor(rnd() * 5) * 3;
    const flat = rnd() < .5;
    const pick = rnd();
    const fill = pick < red ? '#f0200a' : pick > .97 ? '#4c9a10' : '#b89608';
    parts += rect(x - (flat ? 6 : 0), y - (flat ? 0 : 6), flat ? long : 6, flat ? 6 : long, fill);
  }
});
document.getElementById('clusters').innerHTML = parts;
```
FILE: styles.css
```
:root {
  --pale: #9bdadb;
  --teal: #52ceb0;
  --teal-dark: #2f6b60;
  --teal-light: #b4f5e4;
  --yellow: #ffffce;
  --orange: #fdc64c;
  --gold: #d8a800;
  --mono: "Liberation Mono", monospace;
  --serif: "Liberation Serif", serif;
  --ui: "Open Sans", sans-serif;
}

* {
  box-sizing: border-box;
}

body {
  margin: 0;
  height: 100vh;
  display: flex;
  flex-direction: column;
  overflow: hidden;
  background: #000;
  color: #000;
  font-family: var(--mono);
}

button,
input,
select {
  margin: 0;
  padding: 0;
  border: 0;
  border-radius: 0;
  background: none;
  color: inherit;
  font: inherit;
}

svg {
  display: block;
}

.defs {
  display: none;
}

.window {
  flex: 1;
  min-height: 0;
  display: flex;
  flex-direction: column;
  padding: 0 8px 9px 0;
  background: linear-gradient(#d8fdfd, #f0ffff);
  border-right: 1px solid #567;
}

/* title bar */
.titlebar {
  height: 21px;
  margin-right: -8px;
  display: flex;
  align-items: flex-start;
  gap: 5px;
  background: linear-gradient(90deg, #d5e6ea, #c4ecf0 20%, #b9e9ee 30%, #d2f6f6 38%, #c9f0f2 60%, #b5e6ee 70%, #4f86bd 73%, #d8ffff 75%, #c8fbfb 90%, #e2ffff);
  font: 13px/14px var(--ui);
}

.app-icon {
  width: 16px;
  height: 15px;
}

.titlebar .app-icon {
  width: 8px;
}

.win-controls {
  margin-left: auto;
  margin-right: 7px;
  display: flex;
  height: 12px;
  border: 1px solid #789;
  border-top: 0;
  border-radius: 0 0 5px 5px;
}

.win-controls button {
  width: 28px;
  height: 11px;
  display: flex;
  justify-content: center;
}

.win-controls button + button {
  border-left: 1px solid #9ab;
}

.win-controls .wide {
  width: 46px;
}

.win-controls svg {
  width: 14px;
  height: 10px;
}

/* menu and brand */
.header {
  height: 57px;
  display: flex;
  background: var(--pale);
}

.menu,
.brand {
  border: 2px solid #d0f5f5;
  border-top: 3px solid #567878;
}

.menu {
  flex: 1;
  display: flex;
  align-items: center;
  gap: 18px;
  padding: 0 14px 0 8px;
  border-left: 0;
  border-right: 2px solid #567878;
  box-shadow: inset 0 -2px #567878, inset 0 2px #d0f5f5;
  font: bold 14px/20px var(--serif);
}

.menu a {
  color: inherit;
  text-decoration: none;
}

.menu u {
  text-underline-offset: 4px;
}

.help {
  margin-left: auto;
}

.brand {
  width: 414px;
  display: flex;
  justify-content: space-between;
  padding: 2px 1px 0 5px;
  border-left: 3px solid #567878;
}

.logo {
  display: flex;
  align-items: center;
  height: 46px;
  font: italic bold 32px/32px "Liberation Sans", sans-serif;
  color: #00007c;
}

.speed {
  width: 21px;
  height: 24px;
}

.target {
  width: 19px;
  height: 24px;
}

.product {
  text-align: center;
  font-family: var(--serif);
}

.product strong,
.product em {
  display: block;
}

.product strong {
  font-size: 24px;
  line-height: 26px;
}

.product em {
  font-size: 14px;
  font-weight: bold;
  line-height: 24px;
}

.clock {
  padding-top: 1px;
  font: italic 15px/15px var(--mono);
}

.time {
  padding-left: 14px;
}

.pause {
  display: flex;
  justify-content: flex-end;
  gap: 2px;
  padding: 6px 20px 0 0;
}

.pause i {
  width: 4px;
  height: 9px;
  background: #f00;
}

/* work area */
.main {
  position: relative;
  flex: 1;
  min-height: 0;
  display: flex;
  background: #000;
}

.left {
  width: 147px;
  display: flex;
  flex-direction: column;
  padding: 3px 2px 4px 0;
  background: var(--teal);
  font-size: 15px;
}

.info {
  height: 19px;
  border: 1px solid #000;
  border-left: 0;
  line-height: 17px;
  background: var(--pale);
  white-space: nowrap;
}

.matrix-wrap {
  margin-top: 2px;
  padding: 2px;
  padding-left: 0;
  border: 1px solid #000;
  border-left: 0;
}

.matrix {
  width: 100%;
  height: 22px;
  padding-left: 1px;
  border: 2px solid #c8f8f4;
  border-left: 0;
  border-right-color: #567878;
  border-bottom-color: #567878;
  background: var(--pale);
  text-align: left;
  white-space: nowrap;
  line-height: 16px;
}

.layer-box {
  flex: 1;
  min-height: 0;
  display: flex;
  gap: 5px;
  margin-top: 4px;
  border-top: 4px solid var(--teal-dark);
  border-bottom: 2px solid var(--teal-light);
}

.layers {
  flex: 1;
  overflow: hidden;
  display: flex;
  flex-direction: column;
  gap: 2px;
  padding-top: 1px;
  border-top: 1px solid #000;
  border-right: 6px double var(--teal-light);
  font-size: 12px;
}

.group {
  flex: none;
  margin-right: 4px;
  padding: 1px 1px 0 1px;
  background: #000;
  border-bottom: 1px solid #000;
}

.group + .group {
  border-top: 1px solid #000;
}

.layer {
  height: 16px;
  padding-bottom: 2px;
  display: flex;
}

.layer input {
  appearance: none;
  flex: none;
  width: 14px;
  height: 14px;
  background: #fff;
  border: 2px solid #fff;
  box-shadow: inset 0 0 0 2px #000;
}

.layer .swatch {
  flex: none;
  width: 14px;
  margin: 0 2px;
}

.sw-green { background: #459a08; }
.sw-blue { background: #0a22ff; }
.sw-red { background: #f00; }

.layer label {
  flex: 1;
  min-width: 0;
  display: flex;
  align-items: center;
  padding: 0 2px;
  background: var(--pale);
  font-weight: bold;
  line-height: 14px;
  white-space: nowrap;
}

.layer label span {
  flex: 1;
  overflow: hidden;
}

.layer.white label { background: #fff; }
.layer.green label { background: #00a67c; color: #043020; }
.layer.orange label { background: var(--orange); }
.layer.gold label { background: var(--gold); }
.layer.slate label { background: #93b0ba; }
.layer.silver label { background: #d8d8d8; }

.work input {
  border-color: #0010a8;
  box-shadow: inset 0 0 0 2px #0010a8;
}

.hand {
  width: 8px;
  height: 8px;
}

.mark {
  width: 5px;
  height: 5px;
  margin-left: 3px;
  border: 1px solid #000;
  background: #777;
}

.track {
  width: 15px;
  display: flex;
  flex-direction: column;
  border-left: 2px solid var(--teal-dark);
  border-right: 2px solid var(--teal-light);
  background: #42ad95;
}

.track svg {
  width: 100%;
  height: 12px;
}

.thumb {
  flex: 590;
  border: 2px solid var(--teal-light);
  border-right-color: var(--teal-dark);
  border-bottom-color: var(--teal-dark);
  background: var(--teal);
}

.rest {
  flex: 176;
}

.selected {
  height: 19px;
  margin-top: 3px;
  border: 1px solid #000;
  border-left: 0;
  background: var(--orange);
  font-size: 12px;
  font-weight: bold;
  line-height: 17px;
}

.canvas {
  flex: 1;
  min-width: 0;
  background: #000;
}

.board {
  width: 100%;
  height: 100%;
}

/* right side */
.right {
  width: 163px;
  display: flex;
  flex-direction: column;
  border-left: 2px solid var(--teal-dark);
  border-right: 2px solid #c0f0e8;
}

.tools {
  display: grid;
  grid-template-columns: repeat(4, 38px);
  gap: 2px;
  padding: 3px 0 1px 1px;
  background: #000;
  border-bottom: 3px solid #c0f0e8;
}

.edit {
  padding: 2px 0 2px 1px;
  border-bottom: 3px solid var(--teal-dark);
}

.tool {
  width: 38px;
  height: 38px;
  padding: 2px;
  border: 2px solid #c0f4f0;
  border-right-color: #567878;
  border-bottom-color: #567878;
  background: var(--pale);
}

.tool svg {
  width: 30px;
  height: 30px;
  border: 1px solid #000;
  overflow: hidden;
  font-family: "DejaVu Sans", sans-serif;
}

.alert { border-color: #a82228; box-shadow: inset 0 0 0 1px #a82228; }
.tool.white { background: #fff; border-color: #ddd #888 #888 #ddd; }
.tool.grey { background: #ccc; border-color: #eee #777 #777 #eee; }
.tool.amber { background: #ffc04a; border-color: #ffdf9a #9a7530 #9a7530 #ffdf9a; }

.overview {
  flex: 1;
  display: flex;
  flex-direction: column;
  justify-content: center;
  background: #000;
}

.extent {
  display: flex;
  justify-content: center;
  padding: 35px 0 22px 6px;
  background: #f00;
}

.extent svg {
  width: 93px;
  height: 56px;
}

.coords {
  height: 47px;
  padding: 6px 2px;
  border-top: 3px solid #c0f0e8;
  border-bottom: 2px solid #c0f0e8;
  background: var(--teal);
  font-size: 15px;
  line-height: 15px;
  white-space: nowrap;
}

/* popview window floating on the canvas */
.popup {
  position: absolute;
  right: 230px;
  top: 236px;
  width: 405px;
  height: 566px;
  display: flex;
  flex-direction: column;
  padding: 0 6px 5px;
  border: 1px solid #c8ccd0;
  border-radius: 6px;
  background: linear-gradient(#6c6e72 0, #66696d 60px, #cfd2d4 158px, #11161a 159px, #1a1e22);
}

.popup-title {
  height: 28px;
  display: flex;
  align-items: flex-start;
  gap: 5px;
  margin: 0 -6px;
  padding: 0 5px 0 7px;
  border-radius: 6px 6px 0 0;
  background: linear-gradient(90deg, #8e9094, #9a9ca0 20%, #55585c 30%, #14171a 45%, #10151a 65%, #303438 76%, #6a6d70 90%);
  font: 12px/26px var(--ui);
}

.popup-title .app-icon {
  margin-top: 6px;
}

.popup-title button {
  width: 48px;
  height: 19px;
  margin-left: auto;
  display: flex;
  align-items: center;
  justify-content: center;
  border: 1px solid #e0b8b0;
  border-top: 0;
  border-radius: 0 0 4px 4px;
  background: linear-gradient(#dca098, #c8685c 45%, #a8301c 50%, #d0563a);
}

.popup-title button svg {
  width: 12px;
  height: 10px;
}

.popup-body {
  flex: 1;
  min-height: 0;
  display: flex;
  border: 1px solid #ccc;
  border-bottom: 0;
  background: #000;
}

.popup-view {
  flex: 1;
  min-width: 0;
  border: 3px solid var(--teal-dark);
  border-right-color: var(--teal-light);
  border-bottom-color: var(--teal-light);
  background: #000;
}

.popup-view svg {
  width: 100%;
  height: 100%;
}

.popup-tools {
  width: 36px;
  display: flex;
  flex-direction: column;
  gap: 2px;
  padding: 1px 1px 1px 2px;
  background: linear-gradient(#000 246px, var(--teal) 246px);
}

.popup-tools .tool {
  width: 33px;
  height: 33px;
  padding: 4px;
  outline: 1px solid var(--teal);
  outline-offset: -1px;
}

.popup-tools svg {
  width: 21px;
  height: 21px;
}

.popup-foot {
  height: 29px;
  padding: 2px;
  border: 1px solid #000;
  background: var(--teal);
}

.popup-foot button {
  width: 100%;
  height: 23px;
  border: 2px solid #c8f8f4;
  border-right-color: #567878;
  border-bottom-color: #567878;
  background: var(--pale);
  font: bold 15px/19px var(--mono);
}

/* command line */
.command {
  height: 33px;
  display: flex;
  background: var(--yellow);
  border: 1px solid #000;
  border-left: 0;
  font-size: 12px;
  font-weight: bold;
}

.cmd-btn {
  width: 29px;
  padding: 3px;
  border-right: 2px solid #000;
}

.cmd-btn svg {
  width: 24px;
  height: 24px;
  padding: 1px;
  border: 1px solid #aaa884;
  background: var(--yellow);
}

.cmd-btn:first-child {
  width: 24px;
  padding-left: 0;
}

.cmd-btn:first-child svg {
  width: 20px;
}

.cmd-btn:nth-child(2) {
  width: 32px;
}

.cmd-btn.on {
  width: 30px;
  padding: 3px 2px;
  border: 1px solid #000;
  background: #60c0a4;
}

.command label {
  padding: 0 9px 0 4px;
  line-height: 31px;
  border-right: 1px solid #60c0a4;
}

/* dotted bar is the text caret */
.command input {
  width: 170px;
  padding: 0 4px;
  border: 3px solid #8c8c70;
  border-right-color: #e0e0b4;
  border-bottom-color: #e0e0b4;
  margin-right: 2px;
  background: repeating-linear-gradient(#555 0 1px, transparent 1px 2px) 5px 3px / 1px 16px no-repeat;
}

.message {
  flex: 1;
  padding-left: 3px;
  border-left: 2px solid #000;
  line-height: 31px;
}

.units {
  position: relative;
  width: 80px;
  padding: 2px 2px 2px 6px;
  border-left: 2px solid #000;
  background: var(--teal);
}

.units select {
  appearance: none;
  width: 100%;
  height: 27px;
  padding-left: 5px;
  border: 2px solid var(--teal-light);
  border-right-color: var(--teal-dark);
  border-bottom-color: var(--teal-dark);
  font-size: 15px;
  font-weight: bold;
}

.units::after {
  content: "";
  position: absolute;
  right: 11px;
  top: 12px;
  width: 12px;
  height: 7px;
  border: 2px solid var(--teal-light);
  border-right-color: var(--teal-dark);
  border-bottom-color: var(--teal-dark);
}

.status {
  height: 30px;
  padding: 1px 2px 1px 0;
  border: 1px solid #000;
  border-top: 2px solid #567878;
  border-left: 0;
  background: #d8ffff;
}

.status div {
  height: 24px;
  border: 2px solid #e4ffff;
  border-bottom-color: #679c9c;
  border-right-color: #679c9c;
  background: #aeffff;
  font-size: 12px;
  font-weight: bold;
  line-height: 22px;
  text-align: center;
}

/* taskbar */
.taskbar {
  height: 40px;
  display: flex;
  align-items: flex-start;
  gap: 3px;
  padding-left: 9px;
  border-top: 1px solid #dfe6ee;
  background:
    radial-gradient(ellipse 50px 30px at 1000px 34px, #4aa848 40%, transparent),
    linear-gradient(100deg, #8ba0b8 0, #8fa3ba 3%, #9aa8b8 19%, #8a5080 27%, #5a2a5a 40%, #9a3a8c 42%, #9a3a8c 44%, #c8b4d0 45%, #c8b4d0 46%, #2a2430 47%, #30808a 49%, #3a8a8a 53%, #c4ccb8 55%, #8f3a84 57%, #8f3a84 59%, #a89ca4 61%, #a08c94 66%, #8c7c86 80%, #7a3272 82%, #7a3a74 84%, #8a98b4 86%, #8ca4c0);
  color: #fff;
}

.start {
  width: 36px;
  height: 38px;
  margin-right: 11px;
}

.start svg {
  width: 36px;
  height: 36px;
}

.task {
  width: 59px;
  height: 38px;
  display: flex;
  align-items: center;
  justify-content: center;
  border: 1px solid #4c5e70;
  border-radius: 3px;
  box-shadow: inset 0 0 0 1px rgba(255, 255, 255, 0.6);
}

.task svg {
  width: 32px;
  height: 32px;
}

.light { background: linear-gradient(#a4b0b4, #b4cce6 50%, #bcd8f4); }
.mix { background: linear-gradient(120deg, #76806e, #a9bdd8 40%, #c0a8d0); }
.purple { background: linear-gradient(120deg, #b8a8c4, #8a5a90 50%, #6d3a78); }
.active { background: linear-gradient(#d8dce8, #e8f0fa); }

.stack {
  border-right: 4px double #d8dce4;
}

.tray {
  margin-left: auto;
  display: flex;
  align-items: center;
  gap: 8px;
  height: 39px;
}

.tray svg {
  width: 16px;
  height: 16px;
}

.tray .lang {
  width: 10px;
  height: 20px;
}

.date {
  width: 74px;
  font: 12px/18px var(--ui);
  text-align: center;
}

.peek {
  width: 14px;
  height: 39px;
  border: 1px solid #5a6c80;
  background: linear-gradient(90deg, #b8c8dc, #8ca4c0);
}
```
